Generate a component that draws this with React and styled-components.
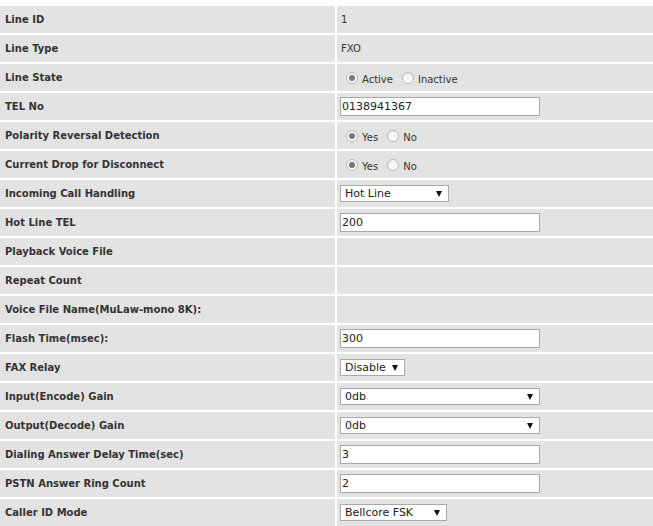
import React from 'react';
import styled, { createGlobalStyle } from 'styled-components';

const GlobalStyle = createGlobalStyle`
  html, body {
    margin: 0;
    padding: 0;
    background: #fff;
  }
  body {
    font-family: "DejaVu Sans", Verdana, sans-serif;
    color: #333;
  }
`;

const Table = styled.div`
  display: flex;
  flex-direction: column;
  gap: 2px;
  padding-top: 6px;
  width: 653px;
  overflow: hidden;
`;

const Row = styled.div`
  display: grid;
  grid-template-columns: 335px 1fr;
  column-gap: 2px;
  height: 27px;
`;

const Label = styled.div`
  background: #e3e3e3;
  display: flex;
  align-items: center;
  padding-left: 5px;
  font-size: 10px;
  font-weight: bold;
  color: #333;
  white-space: nowrap;
`;

const Value = styled.div`
  background: #e3e3e3;
  display: flex;
  align-items: center;
  padding-left: 3px;
  font-size: 10px;
  color: #333;
`;

const Plain = styled.span`
  padding-left: 1px;
`;

const TextInput = styled.input`
  box-sizing: border-box;
  width: 200px;
  height: 19px;
  margin: 0;
  padding: 0 1px;
  border: 1px solid #a9a9a9;
  background: #fff;
  font-family: "DejaVu Sans", Verdana, sans-serif;
  font-size: 11px;
  color: #222;
  outline: none;
`;

const SelectWrap = styled.div`
  position: relative;
  width: ${p => p.$width}px;
  height: 17px;
`;

const Select = styled.select`
  box-sizing: border-box;
  appearance: none;
  width: 100%;
  height: 100%;
  margin: 0;
  padding: 0 0 0 4px;
  border: 1px solid #a9a9a9;
  border-radius: 0;
  background: #fff;
  font-family: "DejaVu Sans", Verdana, sans-serif;
  font-size: 11px;
  color: #222;
  outline: none;
`;

const Arrow = styled.span`
  position: absolute;
  right: 7px;
  top: 6px;
  width: 0;
  height: 0;
  border-left: 3px solid transparent;
  border-right: 3px solid transparent;
  border-top: 6px solid #111;
  pointer-events: none;
`;

const RadioGroup = styled.div`
  display: flex;
  align-items: center;
  gap: 9px;
  padding-left: 6px;
`;

const RadioLabel = styled.label`
  display: flex;
  align-items: center;
  gap: 4px;
  font-size: 10px;
  color: #333;
`;

const RadioText = styled.span`
  position: relative;
  top: 2px;
`;

const Radio = styled.input`
  appearance: none;
  margin: 0;
  width: 12px;
  height: 12px;
  border-radius: 50%;
  border: 1px solid #b8b8b8;
  background: linear-gradient(#f0f0f0, #fdfdfd);
  display: grid;
  place-items: center;

  &:checked::after {
    content: '';
    width: 6px;
    height: 6px;
    border-radius: 50%;
    background: #777;
  }
`;

const RadioPair = ({ name, options, checked }) => (
  <RadioGroup>
    {options.map(o => (
      <RadioLabel key={o}>
        <Radio type="radio" name={name} defaultChecked={o === checked} />
        <RadioText>{o}</RadioText>
      </RadioLabel>
    ))}
  </RadioGroup>
);

const Dropdown = ({ width, value }) => (
  <SelectWrap $width={width}>
    <Select defaultValue={value}>
      <option>{value}</option>
    </Select>
    <Arrow />
  </SelectWrap>
);

const rows = [
  ['Line ID', <Plain>1</Plain>],
  ['Line Type', <Plain>FXO</Plain>],
  ['Line State', <RadioPair name="state" options={['Active', 'Inactive']} checked="Active" />],
  ['TEL No', <TextInput defaultValue="0138941367" />],
  ['Polarity Reversal Detection', <RadioPair name="polarity" options={['Yes', 'No']} checked="Yes" />],
  ['Current Drop for Disconnect', <RadioPair name="drop" options={['Yes', 'No']} checked="Yes" />],
  ['Incoming Call Handling', <Dropdown width={109} value="Hot Line" />],
  ['Hot Line TEL', <TextInput defaultValue="200" />],
  ['Playback Voice File', null],
  ['Repeat Count', null],
  ['Voice File Name(MuLaw-mono 8K):', null],
  ['Flash Time(msec):', <TextInput defaultValue="300" />],
  ['FAX Relay', <Dropdown width={65} value="Disable" />],
  ['Input(Encode) Gain', <Dropdown width={200} value="0db" />],
  ['Output(Decode) Gain', <Dropdown width={200} value="0db" />],
  ['Dialing Answer Delay Time(sec)', <TextInput defaultValue="3" />],
  ['PSTN Answer Ring Count', <TextInput defaultValue="2" />],
  ['Caller ID Mode', <Dropdown width={107} value="Bellcore FSK" />],
];

export default function App() {
  return (
    <>
      <GlobalStyle />
      <Table>
        {rows.map(([label, value]) => (
          <Row key={label}>
            <Label>{label}</Label>
            <Value>{value}</Value>
          </Row>
        ))}
      </Table>
    </>
  );
}
